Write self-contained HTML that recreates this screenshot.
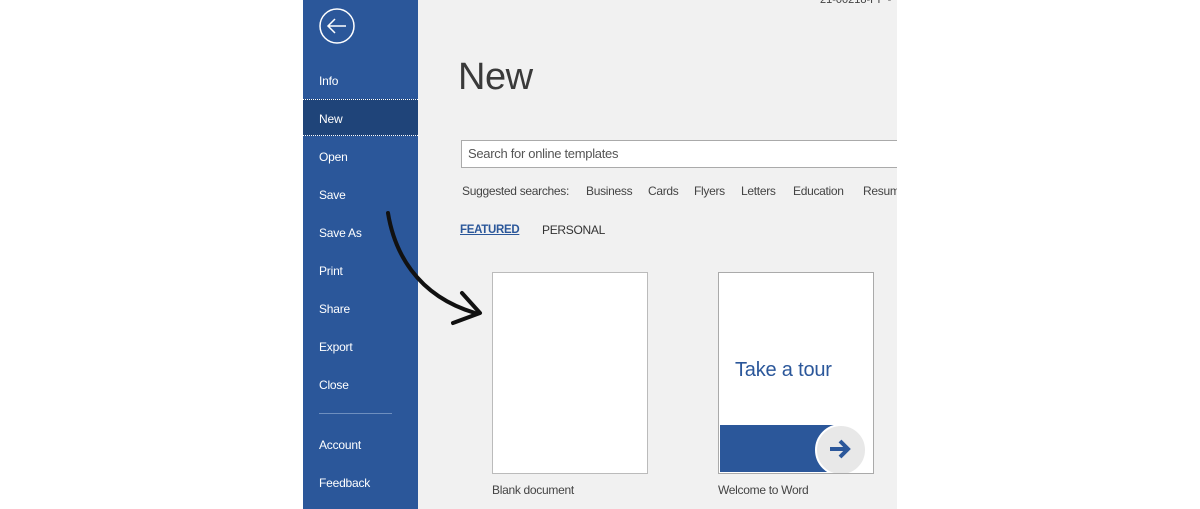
<!DOCTYPE html>
<html><head><style>
body{margin:0;width:1200px;height:509px;background:#fff;position:relative;overflow:hidden;font-family:"Liberation Sans",sans-serif}
.side{position:absolute;left:303px;top:0;width:115px;height:509px;background:#2b579a}
.main{position:absolute;left:418px;top:0;width:479px;height:509px;background:#f1f1f1;overflow:hidden}
.it{position:absolute;left:16px;color:#fff;font-size:12px;letter-spacing:-0.2px}
.a{position:absolute;font-size:12px;color:#444;letter-spacing:-0.3px;line-height:14px}
</style></head><body>
<div class="side">
<svg style="position:absolute;left:15px;top:7px" width="38" height="38" viewBox="0 0 38 38"><circle cx="19" cy="19" r="17" fill="none" stroke="#fff" stroke-width="1.5"/><path d="M10 19H28M17 12L10 19L17 26" fill="none" stroke="#fff" stroke-width="1.5"/></svg>
<div class="it" style="top:74px">Info</div>
<div style="position:absolute;left:0;top:99px;width:115px;height:37px;background:#1f4479;border-top:1px dotted #fff;border-bottom:1px dotted #fff;box-sizing:border-box"></div>
<div class="it" style="top:112px">New</div>
<div class="it" style="top:150px">Open</div>
<div class="it" style="top:188px">Save</div>
<div class="it" style="top:226px">Save As</div>
<div class="it" style="top:264px">Print</div>
<div class="it" style="top:302px">Share</div>
<div class="it" style="top:340px">Export</div>
<div class="it" style="top:378px">Close</div>
<div style="position:absolute;left:16px;top:413px;width:73px;height:1px;background:#6e8fbf"></div>
<div class="it" style="top:438px">Account</div>
<div class="it" style="top:476px">Feedback</div>
</div>
<div class="main">
<div style="position:absolute;left:402px;top:-6px;font-size:11px;color:#444">21-00218-PP -</div>
<div style="position:absolute;left:40px;top:56px;font-size:38px;color:#3a3a3a;letter-spacing:-0.5px">New</div>
<div style="position:absolute;left:43px;top:140px;width:460px;height:28px;background:#fff;border:1px solid #aaa;box-sizing:border-box"></div>
<div class="a" style="left:50px;top:147px;color:#555;font-size:13px">Search for online templates</div>
<div class="a" style="left:44px;top:184px">Suggested searches:</div>
<div class="a" style="left:168px;top:184px">Business</div>
<div class="a" style="left:230px;top:184px">Cards</div>
<div class="a" style="left:276px;top:184px">Flyers</div>
<div class="a" style="left:323px;top:184px">Letters</div>
<div class="a" style="left:375px;top:184px">Education</div>
<div class="a" style="left:445px;top:184px">Resume</div>
<div class="a" style="left:42px;top:223px;color:#2b579a;font-weight:bold;text-decoration:underline;font-size:11.5px">FEATURED</div>
<div class="a" style="left:124px;top:223px;color:#333">PERSONAL</div>
<div style="position:absolute;left:74px;top:272px;width:156px;height:202px;background:#fff;border:1px solid #bbb;box-sizing:border-box"></div>
<div class="a" style="left:74px;top:483px">Blank document</div>
<div style="position:absolute;left:300px;top:272px;width:156px;height:202px;background:#fff;border:1px solid #aaa;box-sizing:border-box;overflow:hidden">
<div style="position:absolute;left:16px;top:86px;font-size:20px;color:#2b579a;letter-spacing:-0.2px">Take a tour</div>
<div style="position:absolute;left:1px;top:152px;width:120px;height:47px;background:#2b579a"></div>
<div style="position:absolute;left:96px;top:151px;width:48px;height:48px;border-radius:50%;background:#e8e8e8;border:2px solid #fff"></div>
<svg style="position:absolute;left:108px;top:163px" width="26" height="26" viewBox="0 0 26 26"><path d="M3 13H20M13 5L21 13L13 21" fill="none" stroke="#2b579a" stroke-width="4"/></svg>
</div>
<div class="a" style="left:300px;top:483px">Welcome to Word</div>
</div>
<svg style="position:absolute;left:380px;top:205px" width="110" height="125" viewBox="0 0 110 125"><path d="M8 8C14 45 35 90 95 108" fill="none" stroke="#111" stroke-width="4" stroke-linecap="round"/><path d="M82 88L100 108L73 118" fill="none" stroke="#111" stroke-width="4" stroke-linecap="round" stroke-linejoin="round"/></svg>
</body></html>
